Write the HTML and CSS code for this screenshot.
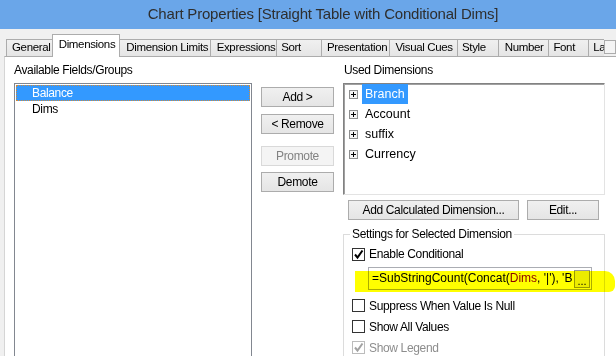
FILE: index.html
```html
<!DOCTYPE html>
<html lang="en">
<head>
    <meta charset="UTF-8">
    <meta name="viewport" content="width=device-width, initial-scale=1.0">
    <title>Chart Properties</title>
    <link rel="stylesheet" href="styles.css">
</head>
<body>
    <div class="window">
        <div class="titlebar">Chart Properties [Straight Table with Conditional Dims]</div>

        <div class="tabstrip">
            <div class="tab tab-general">General</div>
            <div class="tab tab-dims active">Dimensions</div>
            <div class="tab tab-limits">Dimension Limits</div>
            <div class="tab tab-expr">Expressions</div>
            <div class="tab tab-sort">Sort</div>
            <div class="tab tab-pres">Presentation</div>
            <div class="tab tab-cues">Visual Cues</div>
            <div class="tab tab-style">Style</div>
            <div class="tab tab-number">Number</div>
            <div class="tab tab-font">Font</div>
            <div class="tab tab-layout">La</div>
            <div class="tab-scroll"></div>
        </div>

        <div class="panel">
            <!-- available fields -->
            <div class="col-left">
                <div class="label">Available Fields/Groups</div>
                <div class="listbox">
                    <div class="item selected">Balance</div>
                    <div class="item">Dims</div>
                </div>
            </div>

            <div class="col-buttons">
                <button class="btn btn-add">Add &gt;</button>
                <button class="btn btn-remove">&lt; Remove</button>
                <button class="btn btn-promote" disabled>Promote</button>
                <button class="btn btn-demote">Demote</button>
            </div>

            <!-- used dimensions -->
            <div class="col-right">
                <div class="label label-used">Used Dimensions</div>
                <div class="tree">
                    <div class="node"><span class="expander"><svg width="9" height="9" viewBox="0 0 9 9"><rect x="0.5" y="0.5" width="8" height="8" fill="#f4f4f4" stroke="#8e8f8f"/><path d="M2 4.5h5M4.5 2v5" stroke="#000" stroke-width="1"/></svg></span><span class="node-text selected">Branch</span></div>
                    <div class="node"><span class="expander"><svg width="9" height="9" viewBox="0 0 9 9"><rect x="0.5" y="0.5" width="8" height="8" fill="#f4f4f4" stroke="#8e8f8f"/><path d="M2 4.5h5M4.5 2v5" stroke="#000" stroke-width="1"/></svg></span><span class="node-text">Account</span></div>
                    <div class="node"><span class="expander"><svg width="9" height="9" viewBox="0 0 9 9"><rect x="0.5" y="0.5" width="8" height="8" fill="#f4f4f4" stroke="#8e8f8f"/><path d="M2 4.5h5M4.5 2v5" stroke="#000" stroke-width="1"/></svg></span><span class="node-text">suffix</span></div>
                    <div class="node"><span class="expander"><svg width="9" height="9" viewBox="0 0 9 9"><rect x="0.5" y="0.5" width="8" height="8" fill="#f4f4f4" stroke="#8e8f8f"/><path d="M2 4.5h5M4.5 2v5" stroke="#000" stroke-width="1"/></svg></span><span class="node-text">Currency</span></div>
                </div>

                <div class="btn-row">
                    <button class="btn btn-calc">Add Calculated Dimension...</button>
                    <button class="btn btn-edit">Edit...</button>
                </div>

                <fieldset class="group">
                    <legend>Settings for Selected Dimension</legend>

                    <div class="check-row row-enable">
                        <span class="checkbox"><svg width="11" height="11" viewBox="0 0 11 11"><path d="M2 5.5l2.5 3 5-7" fill="none" stroke="#000" stroke-width="2"/></svg></span>
                        Enable Conditional
                    </div>

                    <div class="expr-row">
                        <div class="expr">=SubStringCount(Concat(<span class="field-name">Dims</span>, '|'), 'B</div>
                        <button class="dots">...</button>
                        <div class="marker"></div>
                    </div>

                    <div class="check-row row-suppress">
                        <span class="checkbox"></span>
                        Suppress When Value Is Null
                    </div>
                    <div class="check-row">
                        <span class="checkbox"></span>
                        Show All Values
                    </div>
                    <div class="check-row disabled">
                        <span class="checkbox"><svg width="11" height="11" viewBox="0 0 11 11"><path d="M2 5.5l2.5 3 5-7" fill="none" stroke="#a2a2a2" stroke-width="2"/></svg></span>
                        Show Legend
                    </div>
                </fieldset>
            </div>
        </div>
    </div>
</body>
</html>
```

FILE: styles.css
```css
body {
    margin: 0;
    font-family: "Liberation Sans", Arial, sans-serif;
    font-size: 12px;
    color: #000;
    background: #f0f0f0;
    overflow: hidden;
}

.window {
    width: 616px;
    height: 356px;
    display: flex;
    flex-direction: column;
    overflow: hidden;
}

.titlebar {
    flex-shrink: 0;
    height: 29px;
    line-height: 27px;
    background: #6aa6e9;
    color: #2e2e2e;
    font-size: 15px;
    letter-spacing: -0.2px;
    text-align: center;
    padding-left: 30px;
    white-space: nowrap;
}

/* tab strip */
.tabstrip {
    flex-shrink: 0;
    height: 27px;
    display: flex;
    align-items: flex-end;
    padding-left: 6px;
    white-space: nowrap;
}

.tab {
    height: 17px;
    line-height: 14px;
    padding-left: 5px;
    font-size: 11.5px;
    letter-spacing: -0.35px;
    overflow: hidden;
    border: 1px solid #acacac;
    border-left: none;
    border-bottom: none;
    background: linear-gradient(#f0f0f0, #e5e5e5);
    box-sizing: border-box;
}

.tab-general {
    width: 47px;
    border-left: 1px solid #acacac;
}

.tab.active {
    height: 23px;
    margin-bottom: -1px;
    padding-top: 2px;
    padding-left: 6px;
    background: #fff;
    border-left: 1px solid #acacac;
    margin-left: -1px;
    position: relative;
    z-index: 1;
}

.tab-dims { width: 69px; }
.tab-limits { width: 91px; padding-left: 6px; }
.tab-expr { width: 67px; padding-left: 6px; }
.tab-sort { width: 45px; padding-left: 4px; }
.tab-pres { width: 69px; padding-left: 5px; }
.tab-cues { width: 68px; padding-left: 5px; }
.tab-style { width: 41px; padding-left: 4px; }
.tab-number { width: 51px; padding-left: 6px; }
.tab-font { width: 40px; padding-left: 4px; }
.tab-layout { width: 15px; padding-left: 4px; border-right: none; }

.tab-scroll {
    width: 12px;
    height: 14px;
    margin-bottom: 2px;
    border: 1px solid #acacac;
    background: #f4f4f4;
    box-sizing: border-box;
}

/* main page of the dialog */
.panel {
    flex: 1;
    min-height: 0;
    overflow: hidden;
    display: flex;
    margin-left: 4px;
    padding-left: 9px;
    background: #fff;
    border-left: 1px solid #d5d5d5;
    border-top: 1px solid #acacac;
    letter-spacing: -0.35px;
}

.label {
    line-height: 14px;
    margin-top: 6px;
    margin-bottom: 6px;
    white-space: nowrap;
}

.col-left {
    width: 238px;
    flex-shrink: 0;
}

.listbox {
    height: 300px;
    border: 1px solid #828790;
    padding: 1px;
}

.item {
    height: 16px;
    line-height: 16px;
    padding-left: 16px;
}

.item.selected {
    background: #3399ff;
    color: #fff;
    outline: 1px dotted #d08a3a;
    outline-offset: -1px;
}

.col-buttons {
    width: 73px;
    flex-shrink: 0;
    margin-left: 9px;
    padding-top: 30px;
    display: flex;
    flex-direction: column;
}

.btn {
    height: 20px;
    flex-shrink: 0;
    padding: 0;
    font-family: "Liberation Sans", Arial, sans-serif;
    font-size: 12px;
    letter-spacing: -0.35px;
    color: #000;
    background: linear-gradient(#f0f0f0, #e5e5e5);
    border: 1px solid #acacac;
    white-space: nowrap;
}

.btn-remove { margin-top: 7px; }
.btn-promote {
    margin-top: 12px;
    color: #838383;
    background: #f4f4f4;
    border-color: #d9d9d9;
}
.btn-demote { margin-top: 6px; }

.col-right {
    width: 262px;
    flex-shrink: 0;
    margin-left: 9px;
}

.label-used {
    padding-left: 1px;
}

.tree {
    height: 112px;
    box-sizing: border-box;
    border: 1px solid;
    border-color: #828282 #e3e3e3 #e3e3e3 #828282;
    box-shadow: inset 1px 1px 0 #a0a0a0;
}

.node {
    height: 20px;
    display: flex;
    align-items: center;
}

.expander {
    width: 9px;
    height: 9px;
    margin-left: 5px;
    margin-right: 4px;
    display: flex;
}

.node-text {
    height: 20px;
    line-height: 20px;
    padding: 0 3px;
    font-size: 12.5px;
    letter-spacing: 0;
}

.node-text.selected {
    background: #3399ff;
    color: #fff;
}

.btn-row {
    display: flex;
    margin-top: 5px;
    padding-left: 5px;
    gap: 8px;
}

.btn-calc { width: 171px; }
.btn-edit { width: 72px; }

/* settings group */
.group {
    margin: 7px 0 0;
    padding: 0 0 0 8px;
    border: 1px solid #dcdcdc;
    min-inline-size: 0;
    width: 262px;
    box-sizing: border-box;
}

.group legend {
    padding: 0 2px;
    margin-left: -2px;
    line-height: 14px;
    white-space: nowrap;
}

.check-row {
    height: 21px;
    display: flex;
    align-items: center;
    gap: 4px;
    white-space: nowrap;
}

.row-enable {
    height: 20px;
    margin-top: 3px;
}

.row-suppress {
    margin-top: 5px;
}

.checkbox {
    width: 13px;
    height: 13px;
    box-sizing: border-box;
    border: 1px solid #333;
    background: #fff;
    display: flex;
    align-items: center;
    justify-content: center;
}

.check-row.disabled {
    color: #8d8d8d;
}

.check-row.disabled .checkbox {
    border-color: #bcbcbc;
}

.expr-row {
    position: relative;
    height: 23px;
    margin-top: 3px;
}

.expr {
    margin-left: 16px;
    width: 224px;
    height: 23px;
    box-sizing: border-box;
    border: 1px solid #abadb3;
    padding: 0 20px 0 3px;
    line-height: 21px;
    letter-spacing: 0;
    white-space: nowrap;
    overflow: hidden;
    background: #fff;
}

.field-name {
    color: #8b0000;
}

/* small browse button sitting inside the field */
.dots {
    position: absolute;
    left: 222px;
    top: 3px;
    width: 16px;
    height: 18px;
    padding: 4px 0 0;
    font-family: "Liberation Sans", Arial, sans-serif;
    font-size: 11px;
    line-height: 12px;
    letter-spacing: 0;
    color: #000;
    background: #ececec;
    border: 1px solid #9a9a9a;
}

/* yellow highlighter stroke drawn over the expression */
.marker {
    position: absolute;
    left: 3px;
    top: 4px;
    width: 260px;
    height: 21px;
    background: #ffff00;
    border-radius: 0 10px 6px 0;
    mix-blend-mode: multiply;
}
```
